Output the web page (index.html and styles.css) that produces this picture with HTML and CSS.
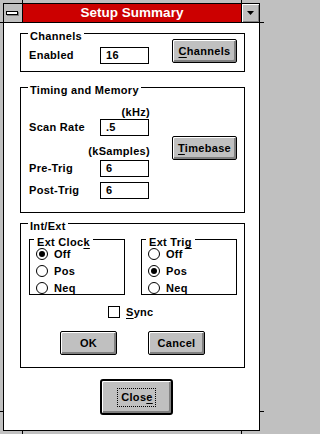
FILE: index.html
```html
<!DOCTYPE html>
<html>
<head>
<meta charset="utf-8">
<title>Setup Summary</title>
<link rel="stylesheet" href="styles.css">
</head>
<body>
<div class="window">
  <div class="frame">
    <div class="titlebar">
      <div class="sysmenu"><span class="sysbar"></span></div>
      <div class="caption">Setup Summary</div>
      <div class="minbtn"><svg width="7" height="4" viewBox="0 0 7 4"><polygon points="0,0 7,0 3.5,4" fill="#000"/></svg></div>
    </div>
    <div class="client">
      <div class="group g-channels">
        <span class="legend">Channels</span>
        <div class="ch-row">
          <span class="label ch-label">Enabled</span>
          <span class="edit ch-edit">16</span>
          <div class="btn btn-side"><span><u>C</u>hannels</span></div>
        </div>
      </div>

      <div class="group g-timing">
        <span class="legend">Timing and Memory</span>
        <div class="tm-body">
          <div class="fields">
            <div class="unit">(kHz)</div>
            <div class="field f-scan"><span class="label">Scan Rate</span><span class="edit">.5</span></div>
            <div class="unit unit-samples">(kSamples)</div>
            <div class="field f-pre"><span class="label">Pre-Trig</span><span class="edit">6</span></div>
            <div class="field f-post"><span class="label">Post-Trig</span><span class="edit">6</span></div>
          </div>
          <div class="btn btn-side btn-timebase"><span><u>T</u>imebase</span></div>
        </div>
      </div>

      <div class="group g-intext">
        <span class="legend">Int/Ext</span>
        <div class="subgroups">
          <div class="subgroup">
            <span class="legend legend-sub">Ext Cloc<u>k</u></span>
            <div class="radio"><svg class="rb" width="12" height="12" viewBox="0 0 12 12"><circle cx="6" cy="6" r="5.5" fill="#fff" stroke="#000"/><circle cx="6" cy="6" r="3" fill="#000"/></svg><span>Off</span></div>
            <div class="radio"><svg class="rb" width="12" height="12" viewBox="0 0 12 12"><circle cx="6" cy="6" r="5.5" fill="#fff" stroke="#000"/></svg><span>Pos</span></div>
            <div class="radio"><svg class="rb" width="12" height="12" viewBox="0 0 12 12"><circle cx="6" cy="6" r="5.5" fill="#fff" stroke="#000"/></svg><span>Neq</span></div>
          </div>
          <div class="subgroup">
            <span class="legend legend-sub">Ext Tri<u>g</u></span>
            <div class="radio"><svg class="rb" width="12" height="12" viewBox="0 0 12 12"><circle cx="6" cy="6" r="5.5" fill="#fff" stroke="#000"/></svg><span>Off</span></div>
            <div class="radio"><svg class="rb" width="12" height="12" viewBox="0 0 12 12"><circle cx="6" cy="6" r="5.5" fill="#fff" stroke="#000"/><circle cx="6" cy="6" r="3" fill="#000"/></svg><span>Pos</span></div>
            <div class="radio"><svg class="rb" width="12" height="12" viewBox="0 0 12 12"><circle cx="6" cy="6" r="5.5" fill="#fff" stroke="#000"/></svg><span>Neq</span></div>
          </div>
        </div>
        <div class="sync"><span class="checkbox"></span><span><u>S</u>ync</span></div>
        <div class="actions">
          <div class="btn btn-action"><span>OK</span></div>
          <div class="btn btn-action"><span>Cancel</span></div>
        </div>
      </div>

      <div class="btn btn-default btn-close"><span class="focus">Clos<u>e</u></span></div>
    </div>
  </div>
  <span class="tick tick-v tick-tl"></span>
  <span class="tick tick-v tick-tr"></span>
  <span class="tick tick-v tick-bl"></span>
  <span class="tick tick-v tick-br"></span>
  <span class="tick tick-h tick-lt"></span>
  <span class="tick tick-h tick-rt"></span>
  <span class="tick tick-h tick-lb"></span>
  <span class="tick tick-h tick-rb"></span>
</div>
</body>
</html>
```

FILE: styles.css
```css
html, body {
  margin: 0;
  padding: 0;
  background: #c0c0c0;
}

body {
  font-family: "Liberation Sans", Arial, sans-serif;
  font-weight: bold;
  font-size: 11px;
  letter-spacing: 0.3px;
  line-height: 12px;
  color: #000;
}

u {
  text-decoration: underline;
  text-decoration-thickness: 1px;
  text-underline-offset: 2px;
}

.window {
  position: relative;
  width: 264px;
  height: 434px;
  box-sizing: border-box;
  padding: 3px 4px 3px 3px;
  background: #c0c0c0;
}

.frame {
  height: 100%;
  box-sizing: border-box;
  border: 1px solid #000;
  display: flex;
  flex-direction: column;
  background: #fff;
}

/* title bar */
.titlebar {
  display: flex;
  height: 18px;
  border-bottom: 1px solid #000;
}

.sysmenu {
  width: 19px;
  box-sizing: border-box;
  border-right: 1px solid #000;
  background: #c0c0c0;
  display: flex;
  align-items: center;
  padding-left: 2px;
}

.sysbar {
  display: block;
  width: 10px;
  height: 2px;
  border: 1px solid #000;
  background: #fff;
  box-shadow: 1px 1px 0 #808080;
}

.caption {
  flex: 1;
  background: #cc0000;
  color: #fff;
  text-align: center;
  font-size: 13.5px;
  line-height: 17px;
  letter-spacing: 0;
}

.minbtn {
  width: 17px;
  border-left: 1px solid #000;
  background: #c0c0c0;
  box-shadow: inset 1px 1px 0 #fff, inset -1px -1px 0 #808080;
  display: flex;
  align-items: center;
  justify-content: center;
}

.minbtn svg {
  display: block;
}

/* client area */
.client {
  flex: 1;
  padding-top: 10px;
  display: flex;
  flex-direction: column;
}

.group {
  position: relative;
  width: 225px;
  margin-left: 16px;
  box-sizing: border-box;
  border: 1px solid #000;
}

.legend {
  position: absolute;
  top: -4px;
  left: 7px;
  padding: 0 2px;
  background: #fff;
  white-space: nowrap;
}

.legend-sub {
  left: 4px;
  padding: 0 3px;
}

.label {
  white-space: nowrap;
}

.edit {
  display: block;
  width: 49px;
  height: 17px;
  box-sizing: border-box;
  border: 1px solid #000;
  padding: 1px 0 0 5px;
  background: #fff;
}

/* buttons */
.btn {
  box-sizing: border-box;
  border: 1px solid #000;
  border-radius: 2px;
  background: #c0c0c0;
  box-shadow: inset 1px 1px 0 #fff, inset -2px -2px 0 #808080;
  display: flex;
  align-items: center;
  justify-content: center;
  white-space: nowrap;
}

.btn-side {
  width: 65px;
  height: 24px;
  margin-left: 23px;
  flex: none;
}

.btn-action {
  width: 57px;
  height: 24px;
}

.btn-default {
  border-width: 2px;
  border-radius: 3px;
}

.btn-close {
  width: 73px;
  height: 36px;
  margin-top: 11px;
  margin-left: 96px;
}

.focus {
  outline: 1px dotted #000;
  outline-offset: 0;
  padding: 2px 2px 3px 3px;
}

/* channels */
.g-channels {
  padding: 5px 7px 7px 8px;
}

.ch-row {
  display: flex;
  align-items: flex-start;
}

.ch-label {
  width: 71px;
  margin-top: 10px;
}

.ch-edit {
  margin-top: 8px;
}

/* timing */
.g-timing {
  margin-top: 15px;
  padding: 18px 7px 13px 8px;
}

.tm-body {
  display: flex;
  align-items: flex-start;
}

.fields {
  width: 120px;
  display: flex;
  flex-direction: column;
}

.unit {
  text-align: right;
  margin-right: -1px;
}

.unit-samples {
  margin-top: 9px;
}

.field {
  display: flex;
  align-items: baseline;
}

.field .label {
  width: 71px;
}

.f-scan {
  margin-top: 1px;
}

.f-pre {
  margin-top: 3px;
}

.f-post {
  margin-top: 5px;
}

.btn-timebase {
  margin-top: 30px;
}

/* int/ext */
.g-intext {
  margin-top: 10px;
  padding: 15px 7px 12px 8px;
}

.subgroups {
  display: flex;
  gap: 16px;
}

.subgroup {
  position: relative;
  width: 96px;
  height: 56px;
  box-sizing: border-box;
  border: 1px solid #000;
  padding: 8px 0 0 6px;
  display: flex;
  flex-direction: column;
  gap: 5px;
}

.radio {
  display: flex;
  align-items: flex-start;
  gap: 6px;
  height: 12px;
}

.rb {
  display: block;
  flex: none;
}

.sync {
  display: flex;
  align-items: flex-start;
  gap: 6px;
  margin-top: 11px;
  margin-left: 79px;
}

.checkbox {
  display: block;
  width: 12px;
  height: 12px;
  box-sizing: border-box;
  border: 1px solid #000;
  background: #fff;
}

.actions {
  display: flex;
  gap: 31px;
  margin-top: 13px;
  margin-left: 31px;
}

/* frame resize ticks */
.tick {
  position: absolute;
  background: #000;
}

.tick-v {
  width: 1px;
  height: 3px;
}

.tick-h {
  height: 1px;
}

.tick-tl { left: 22px; top: 0; }
.tick-tr { left: 241px; top: 0; }
.tick-bl { left: 22px; bottom: 0; }
.tick-br { left: 241px; bottom: 0; }
.tick-lt { left: 0; top: 22px; width: 3px; }
.tick-rt { right: 0; top: 22px; width: 4px; }
.tick-lb { left: 0; top: 411px; width: 3px; }
.tick-rb { right: 0; top: 411px; width: 4px; }
```
